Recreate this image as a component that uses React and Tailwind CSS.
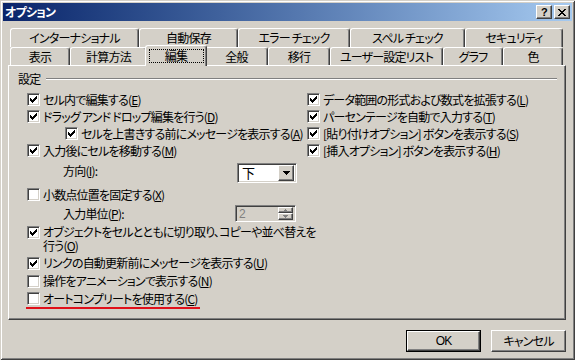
import React from 'react';

// Classic Windows dialog: Excel options, 編集 tab
const FONT = "font-['MS_UI_Gothic','Noto_Sans_CJK_JP',sans-serif] [font-feature-settings:'palt'] tracking-[-0.8px]";

const raised = 'bg-[#d4d0c8] border-t border-l border-white border-r border-b border-r-[#404040] border-b-[#404040] shadow-[inset_-1px_-1px_#808080]';

const Tick = () => (
    <svg width="7" height="7" viewBox="0 0 7 7" shapeRendering="crispEdges">
        <path
            fill="#000"
            d="M6 0h1v1H6z M5 1h2v1H5z M0 2h1v1H0z M4 2h3v1H4z M0 3h2v1H0z M3 3h3v1H3z M0 4h5v1H0z M1 5h3v1H1z M2 6h1v1H2z"
        />
    </svg>
);

const Box = ({ on }) => (
    <div className="w-[13px] h-[13px] shrink-0 flex items-center justify-center bg-white border-t border-l border-[#808080] border-r border-b border-r-white border-b-white shadow-[inset_1px_1px_#404040,inset_-1px_-1px_#d4d0c8]">
        {on && <Tick />}
    </div>
);

const Key = ({ k }) => (
    <>
        (<u className="underline-offset-[1px]">{k}</u>)
    </>
);

const Row = ({ on, text, k, className = '' }) => (
    <div className={`h-[17px] flex items-center gap-[3px] whitespace-nowrap ${className}`}>
        <Box on={on} />
        <span>
            {text}
            <Key k={k} />
        </span>
    </div>
);

const Tab = ({ label, w, h = 'h-[19px]' }) => (
    <div
        style={{ width: w }}
        className={`${h} shrink-0 flex items-center justify-center rounded-t-[3px] border-t border-l border-white border-r border-r-[#404040] shadow-[inset_-1px_0_#808080] bg-[#d4d0c8]`}
    >
        {label}
    </div>
);

const backRow = [
    ['インターナショナル', 129],
    ['自動保存', 99],
    ['エラー チェック', 112],
    ['スペル チェック', 115],
    ['セキュリティ', 98],
];

const frontRow = [
    ['表示', 60],
    ['計算方法', 77],
    ['編集', 58, true],
    ['全般', 63],
    ['移行', 62],
    ['ユーザー設定リスト', 113],
    ['グラフ', 60],
    ['色', 60],
];

export default function App() {
    return (
        <div className={`w-[575px] h-[360px] bg-[#d4d0c8] text-black text-[12px] leading-[14px] ${FONT} shadow-[inset_1px_1px_#d4d0c8,inset_-1px_-1px_#404040,inset_2px_2px_#ffffff,inset_-2px_-2px_#808080] overflow-hidden`}>
            {/* title bar */}
            <div className="mx-[3px] pt-[3px]">
                <div className="h-[18px] flex items-center justify-between bg-gradient-to-r from-[#0a246a] to-[#a6caf0] pl-[2px] pr-[2px]">
                    <span className="text-white font-bold text-[12px]">オプション</span>
                    <div className="flex gap-[2px]">
                        <div className={`w-[16px] h-[14px] ${raised} flex items-center justify-center text-[11px] font-bold leading-none font-['Liberation_Sans',sans-serif]`}>?</div>
                        <div className={`w-[16px] h-[14px] ${raised} flex items-center justify-center`}>
                            <svg width="8" height="7" viewBox="0 0 8 7" shapeRendering="crispEdges">
                                <path fill="#000" d="M0 0h2v1h1v1h2V1h1V0h2v1H7v1H6v1H5v1h1v1h1v1h1v1H6V6H5V5H3v1H2v1H0V6h1V5h1V4h1V3H2V2H1V1H0z" />
                            </svg>
                        </div>
                    </div>
                </div>
            </div>

            {/* tabs */}
            <div className="mt-[7px] ml-[10px]">
                <div className="flex">
                    {backRow.map(([l, w]) => (
                        <Tab key={l} label={l} w={w} />
                    ))}
                </div>
                <div className="flex items-end h-[18px]">
                    {frontRow.map(([l, w, sel]) =>
                        sel ? (
                            <div
                                key={l}
                                style={{ width: w + 4 }}
                                className="relative z-10 -mx-[2px] -mb-[1px] h-[21px] shrink-0 flex items-start justify-center pt-[3px] rounded-t-[3px] border-t border-l border-white border-r border-r-[#404040] shadow-[inset_-1px_0_#808080] bg-[#d4d0c8]"
                            >
                                <span className="border border-dotted border-black w-[55px] h-[14px] flex items-center justify-center">{l}</span>
                            </div>
                        ) : (
                            <Tab key={l} label={l} w={w} h="h-[18px]" />
                        )
                    )}
                </div>
            </div>

            {/* page */}
            <div className="ml-[8px] w-[558px] h-[255px] border-t border-l border-white border-r border-b border-r-[#404040] border-b-[#404040] shadow-[inset_-1px_-1px_#808080]">
                <div className="mt-[6px] ml-[9px] mr-[8px] h-[14px] flex items-center">
                    <span>設定</span>
                    <div className="flex-1 ml-[6px] border-t border-[#808080] border-b border-b-white" />
                </div>

                <div className="mt-[5px] ml-[18px] flex">
                    <div className="w-[280px]">
                        <Row on text="セル内で編集する" k="E" />
                        <Row on text="ドラッグ アンド ドロップ編集を行う" k="D" />
                        <Row on text="セルを上書きする前にメッセージを表示する" k="A" className="ml-[38px]" />
                        <Row on text="入力後にセルを移動する" k="M" />

                        <div className="mt-[4px] h-[20px] flex items-start">
                            <span className="ml-[36px] w-[174px] pt-[1px]">方向<Key k="I" />:</span>
                            <div className="w-[60px] h-[20px] flex items-center bg-white border-t border-l border-[#808080] border-r border-b border-r-white border-b-white shadow-[inset_1px_1px_#404040,inset_-1px_-1px_#d4d0c8] p-[2px]">
                                <span className="flex-1 pl-[2px] text-[13px]">下</span>
                                <div className={`w-[16px] h-[16px] ${raised} flex items-center justify-center`}>
                                    <svg width="7" height="4" viewBox="0 0 7 4" shapeRendering="crispEdges">
                                        <path fill="#000" d="M0 0h7v1H6v1H5v1H4v1H3V3H2V2H1V1H0z" />
                                    </svg>
                                </div>
                            </div>
                        </div>

                        <Row text="小数点位置を固定する" k="X" className="mt-[3px]" />

                        <div className="mt-[2px] h-[17px] flex items-center">
                            <span className="ml-[36px] w-[172px]">入力単位<Key k="P" />:</span>
                            <div className="w-[61px] h-[17px] flex items-center bg-[#d4d0c8] border-t border-l border-[#808080] border-r border-b border-r-white border-b-white shadow-[inset_1px_1px_#404040,inset_-1px_-1px_#d4d0c8] pl-[3px] pr-[2px]">
                                <span className="flex-1 text-[#808080] font-['Liberation_Sans',sans-serif] text-[12px]">2</span>
                                <div className="flex flex-col">
                                    <div className={`w-[15px] h-[6px] ${raised} flex items-center justify-center`}>
                                        <svg width="5" height="3" viewBox="0 0 5 3" shapeRendering="crispEdges">
                                            <path fill="#808080" d="M2 0h1v1h1v1h1v1H0V2h1V1h1z" />
                                        </svg>
                                    </div>
                                    <div className={`w-[15px] h-[7px] ${raised} flex items-center justify-center`}>
                                        <svg width="5" height="3" viewBox="0 0 5 3" shapeRendering="crispEdges">
                                            <path fill="#808080" d="M0 0h5v1H4v1H3v1H2V2H1V1H0z" />
                                        </svg>
                                    </div>
                                </div>
                            </div>
                        </div>

                        <div className="mt-[3px] flex items-start gap-[3px] whitespace-nowrap">
                            <div className="pt-[1px]">
                                <Box on />
                            </div>
                            <div className="flex flex-col">
                                <span className="h-[14px]">オブジェクトをセルとともに切り取り、コピーや並べ替えを</span>
                                <span className="h-[14px]">
                                    行う<Key k="O" />
                                </span>
                            </div>
                        </div>

                        <Row on text="リンクの自動更新前にメッセージを表示する" k="U" className="mt-[1px] h-[18px]" />
                        <Row text="操作をアニメーションで表示する" k="N" className="h-[18px]" />
                        <div className="inline-flex border-b-2 border-[#e0101a] -ml-[1px] pl-[1px] pr-[2px]">
                            <Row text="オートコンプリートを使用する" k="C" className="h-[16px]" />
                        </div>
                    </div>

                    <div>
                        <Row on text="データ範囲の形式および数式を拡張する" k="L" />
                        <Row on text="パーセンテージを自動で入力する" k="T" />
                        <Row on text="[貼り付けオプション] ボタンを表示する" k="S" />
                        <Row on text="[挿入オプション] ボタンを表示する" k="H" />
                    </div>
                </div>
            </div>

            {/* buttons */}
            <div className="mt-[10px] pr-[9px] flex justify-end gap-[10px]">
                <div className="w-[75px] h-[22px] border border-black">
                    <div className={`w-full h-full ${raised} flex items-center justify-center font-['Liberation_Sans',sans-serif]`}>OK</div>
                </div>
                <div className={`w-[75px] h-[22px] ${raised} flex items-center justify-center`}>キャンセル</div>
            </div>
        </div>
    );
}
